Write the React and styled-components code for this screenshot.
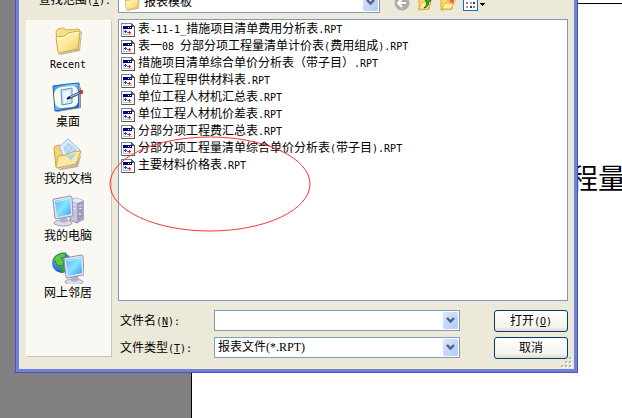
import { useState } from "react";
import styled, { createGlobalStyle } from "styled-components";

const files = [
  "表-11-1_措施项目清单费用分析表.RPT",
  "表一08 分部分项工程量清单计价表(费用组成).RPT",
  "措施项目清单综合单价分析表（带子目）.RPT",
  "单位工程甲供材料表.RPT",
  "单位工程人材机汇总表.RPT",
  "单位工程人材机价差表.RPT",
  "分部分项工程费汇总表.RPT",
  "分部分项工程量清单综合单价分析表(带子目).RPT",
  "主要材料价格表.RPT",
];

// latin runs take half the width of a chinese character
const Mixed = ({ text }) =>
  text
    .split(/([\x20-\x7e]+)/)
    .filter(Boolean)
    .map((part, i) =>
      /^[\x20-\x7e]/.test(part) ? <Latin key={i}>{part}</Latin> : part
    );

const Hotkey = ({ text, letter, colon }) => (
  <>
    {text}
    <Latin>
      (<u>{letter}</u>){colon && ":"}
    </Latin>
  </>
);

const FolderIcon = ({ size = 16 }) => (
  <svg width={size} height={size} viewBox="0 0 32 32">
    <defs>
      <linearGradient id="folder" x1="0" y1="0" x2="1" y2="1">
        <stop offset="0" stopColor="#fffbc4" />
        <stop offset="0.5" stopColor="#fdea9a" />
        <stop offset="1" stopColor="#f3c556" />
      </linearGradient>
    </defs>
    <path d="M6 31l21-5 2-18 1 1-2 19-20 4z" fill="#b9b6aa" />
    <path
      d="M4 9q0-2 2-3l5-1q2 0 3 2l12-1q2 0 2 2l-2 17-18 4q-2 0-2-2z"
      fill="#f8e08a"
      stroke="#d3ae50"
    />
    <path
      d="M4 14l9-1 3-3 11-2q1 0 1 1l-2 17-19 4q-1 0-1-1z"
      fill="url(#folder)"
      stroke="#cda548"
    />
    <path d="M5 15l9-1 3-3 10-2" fill="none" stroke="#fffddc" />
  </svg>
);

const DesktopIcon = () => (
  <svg width="32" height="32" viewBox="0 0 32 32">
    <defs>
      <linearGradient id="blotter" x1="0" y1="0" x2="1" y2="1">
        <stop offset="0" stopColor="#2f83dd" />
        <stop offset="0.4" stopColor="#8fd0fa" />
        <stop offset="0.7" stopColor="#3a8ae0" />
        <stop offset="1" stopColor="#155cb8" />
      </linearGradient>
    </defs>
    <path d="M4 30l24-4V6l1 1v20L5 31z" fill="#8d9199" />
    <path d="M1 5q13-2 26-3v24L3 30z" fill="url(#blotter)" stroke="#1c5fb2" />
    <path
      d="M9 6l12-1q4 1 5 5v11q-1 4-5 5L9 27q-5-1-6-5l-1-10q2-5 7-6z"
      fill="#fdfbe3"
    />
    <path d="M9 9l11-2v15l-10 2z" fill="#cbe9fd" stroke="#4b93d8" />
    <path d="M11 11l7-1v7l-6 6z" fill="#f0f9ff" />
    <path d="M17 17l10-5" stroke="#3f5f92" strokeWidth="3" />
    <path d="M18 16l9-4" stroke="#9dcdf0" />
    <circle cx="29" cy="11" r="2.200" fill="#c9382a" />
    <path d="M15 18l3-2" stroke="#111" strokeWidth="2" />
  </svg>
);

const DocumentsIcon = () => (
  <svg width="32" height="32" viewBox="0 0 32 32">
    <path d="M6 31l18-4 6-13-4 15-17 3z" fill="#b3b0a4" />
    <path
      d="M2 10q0-2 2-2l4-1 3 3 15 1 2 3-4 12-18 4-2-1z"
      fill="#f6d774"
      stroke="#cba346"
    />
    <path d="M7 9l9-8 12 11-6 11-10-4z" fill="#e1f0fe" stroke="#91b8de" />
    <path d="M11 9l5-5 9 8-5 8-6-3z" fill="#a7d3fa" />
    <path d="M13 7l9 9M16 4l-6 7M19 7l-6 8M22 10l-6 8" stroke="#dff0ff" />
    <path
      d="M4 29l2-11 9-1 5-3 9-1-5 13-19 4z"
      fill="#fde8a2"
      stroke="#cfa94e"
    />
    <path d="M15 18l9-3-5 8z" fill="#a9d5f5" />
  </svg>
);

const Screen = () => (
  <>
    <ellipse cx="11" cy="28" rx="9" ry="3" fill="#dcdce8" stroke="#a0a0ba" />
    <path d="M8 22l7-1 1 5q-4 3-8 1z" fill="#b2b2cc" />
    <path
      d="M1 5q0-1 1-1l16-3q2 0 2 2l1 17q0 1-1 1L4 24q-1 0-1-1z"
      fill="#e3e3ef"
      stroke="#9292b2"
    />
    <path d="M3 6l15-3 1 16-14 3z" fill="url(#screen)" />
    <path d="M4 7l13-3" stroke="#bcf2ff" />
  </>
);

const ScreenGradient = () => (
  <defs>
    <linearGradient id="screen" x1="0" y1="0" x2="1" y2="1">
      <stop offset="0" stopColor="#4fb4f6" />
      <stop offset="0.500" stopColor="#86e4ff" />
      <stop offset="1" stopColor="#3d97f0" />
    </linearGradient>
  </defs>
);

const ComputerIcon = () => (
  <svg width="32" height="32" viewBox="0 0 32 32">
    <ScreenGradient />
    <path d="M18 5l6-2 8 3v18l-7 4-7-3z" fill="#c3c3da" stroke="#8f8eb0" />
    <path d="M18 5l6-2 8 3-7 2z" fill="#ebebf4" />
    <path d="M25 8l6-2v17l-6 4z" fill="#9d9cc0" />
    <path d="M20 9l4 1M20 13l4 1M27 11l3-1M27 14l3-1" stroke="#ededf7" />
    <circle cx="28" cy="19" r="1" fill="#d8dcfb" />
    <Screen />
  </svg>
);

const NetworkIcon = () => (
  <svg width="32" height="32" viewBox="0 0 32 32">
    <defs>
      <radialGradient id="globe" cx="0.350" cy="0.300" r="0.800">
        <stop offset="0" stopColor="#7dbdff" />
        <stop offset="1" stopColor="#0748aa" />
      </radialGradient>
    </defs>
    <circle cx="10" cy="11" r="10" fill="url(#globe)" />
    <path
      d="M4 4q5-4 10-3l-1 4-4 1 3 4-2 4-5-1-2-4-2-1z"
      fill="#62c83f"
      stroke="#2a8b29"
    />
    <path d="M10 13l5 1 1 3-5 4-3-4z" fill="#38a432" />
    <g transform="translate(11 2)">
      <Screen />
    </g>
  </svg>
);

const ReportIcon = () => (
  <svg width="14" height="16" viewBox="0 0 14 16" shapeRendering="crispEdges">
    <path d="M0 1h10l4 4v10H0z" fill="#848484" />
    <path d="M1 2h9v3h3v9H1z" fill="#fff" />
    <path d="M10 1h1v1h1v1h1v1h1v11H1v-1h12V5h-3z" fill="#5a5a5a" />
    <path d="M2 4h9v9H2z" fill="#c6c3c6" />
    <path d="M3 7h8v5H3z" fill="#fff" />
    <path d="M2 4h9v3H2z" fill="#000084" />
    <path d="M7 5h1v1H7zM9 5h1v1H9z" fill="#fff" />
    <path d="M4 8h1v1h1v1H5v1H4v-1H3V9h1z" fill="#2139c6" />
    <path d="M8 9h1v1h1v1H9v1H8v-1H7v-1h1z" fill="#e7212b" />
    <path d="M6 10h1v1H6z" fill="#27964a" />
  </svg>
);

const BackIcon = () => (
  <svg width="16" height="16" viewBox="0 0 16 16">
    <circle cx="8" cy="8" r="7.500" fill="#aeaea9" />
    <path d="M12 8H4m4-4L4 8l4 4" fill="none" stroke="#fff" strokeWidth="2" />
  </svg>
);

const UpIcon = () => (
  <svg width="16" height="16" viewBox="0 0 16 16">
    <path d="M2 3h4l2 2h6l-2 9-10 1z" fill="#fbdf72" stroke="#d8a62f" />
    <path d="M2 14l3-7h9l-3 7z" fill="#fff0a0" stroke="#dfb444" />
    <path
      d="M7 13q3-2 3-7H8l3-4 3 4h-2q0 6-5 7z"
      fill="#3daa35"
      stroke="#22771f"
    />
  </svg>
);

const NewFolderIcon = () => (
  <svg width="16" height="16" viewBox="0 0 16 16">
    <path d="M1 4h5l2 2h5l-1 8-11 1z" fill="#fbdc68" stroke="#d9a834" />
    <path d="M2 14l3-6h9l-3 6z" fill="#fff2a6" stroke="#dfb444" />
    <path d="M12 2v8M8 6h8M9 3l6 6M15 3L9 9" stroke="#f9a65c" />
    <circle cx="12" cy="6" r="2" fill="#ee6436" />
  </svg>
);

const ViewsIcon = () => (
  <svg width="24" height="16" viewBox="0 0 24 16" shapeRendering="crispEdges">
    <path d="M0 0h15v16H0z" fill="#1668d8" />
    <path d="M1 1h13v14H1z" fill="#fff" />
    <path d="M3 7h2v2H3zM10 11h2v2h-2z" fill="#5b8ed9" />
    <path d="M7 7h2v2H7zM3 11h2v2H3z" fill="#e98762" />
    <path d="M10 7h2v2h-2zM7 11h2v2H7z" fill="#26365c" />
    <path d="M3 3h2v2H3zM7 3h2v2H7zM10 3h2v2h-2z" fill="#6ca46a" />
    <path d="M17 8h5v1h-1v1h-1v1h-1v-1h-1V9h-1z" fill="#000" />
  </svg>
);

const ArrowIcon = () => (
  <svg width="9" height="7" viewBox="0 0 9 7">
    <path
      d="M1 1l3.500 3.500L8 1"
      fill="none"
      stroke="#4d6185"
      strokeWidth="2.400"
    />
  </svg>
);

const Grip = () => (
  <svg width="12" height="12" viewBox="0 0 12 12" shapeRendering="crispEdges">
    <path
      d="M9 1h2v2H9zM5 5h2v2H5zM9 5h2v2H9zM1 9h2v2H1zM5 9h2v2H5zM9 9h2v2H9z"
      fill="#fff"
    />
    <path
      d="M8 0h2v2H8zM4 4h2v2H4zM8 4h2v2H8zM0 8h2v2H0zM4 8h2v2H4zM8 8h2v2H8z"
      fill="#b8b4a3"
    />
  </svg>
);

const places = [
  { name: "Recent", icon: <FolderIcon size={32} /> },
  { name: "桌面", icon: <DesktopIcon /> },
  { name: "我的文档", icon: <DocumentsIcon /> },
  { name: "我的电脑", icon: <ComputerIcon /> },
  { name: "网上邻居", icon: <NetworkIcon /> },
];

const App = () => {
  const [fileName, setFileName] = useState("");

  return (
    <Workspace>
      <GlobalStyle />
      <Page>
        <Rule />
        <PageTitle>程量</PageTitle>
      </Page>

      <Dialog>
        <LookInLabel htmlFor="lookIn">
          <Hotkey text="查找范围" letter="I" colon />
        </LookInLabel>
        <Toolbar>
          <Combo>
            <ComboIcon>
              <FolderIcon size={18} />
            </ComboIcon>
            <Select id="lookIn">
              <option>报表模板</option>
            </Select>
            <Arrow>
              <ArrowIcon />
            </Arrow>
          </Combo>
          <Tools>
            <ToolButton aria-label="后退">
              <BackIcon />
            </ToolButton>
            <ToolButton aria-label="向上">
              <UpIcon />
            </ToolButton>
            <ToolButton aria-label="新建文件夹">
              <NewFolderIcon />
            </ToolButton>
            <ToolButton aria-label="查看">
              <ViewsIcon />
            </ToolButton>
          </Tools>
        </Toolbar>

        <Places>
          {places.map((place) => (
            <Place key={place.name}>
              {place.icon}
              <PlaceName>
                <Mixed text={place.name} />
              </PlaceName>
            </Place>
          ))}
        </Places>

        <Main>
          <FileList>
            {files.map((file) => (
              <File key={file}>
                <ReportIcon />
                <span>
                  <Mixed text={file} />
                </span>
              </File>
            ))}
          </FileList>
          <Fields>
            <label htmlFor="fileName">
              <Hotkey text="文件名" letter="N" colon />
            </label>
            <Combo>
              <Input
                id="fileName"
                value={fileName}
                onChange={(e) => setFileName(e.target.value)}
              />
              <Arrow>
                <ArrowIcon />
              </Arrow>
            </Combo>
            <Button>
              <Hotkey text="打开" letter="O" />
            </Button>
            <label htmlFor="fileType">
              <Hotkey text="文件类型" letter="T" colon />
            </label>
            <Combo>
              <Select id="fileType">
                <option>报表文件(*.RPT)</option>
              </Select>
              <Arrow>
                <ArrowIcon />
              </Arrow>
            </Combo>
            <Button>取消</Button>
          </Fields>
        </Main>
        <Corner>
          <Grip />
        </Corner>
      </Dialog>

      <Marker width="202" height="97" viewBox="0 0 202 97">
        <ellipse cx="101" cy="48" rx="100" ry="47" />
      </Marker>
    </Workspace>
  );
};

export default App;

const GlobalStyle = createGlobalStyle`
  * {
    box-sizing: border-box;
  }

  body {
    margin: 0;
    color: #000;
    font-family: "Liberation Serif", "Noto Sans CJK SC", serif;
    font-size: 12px;
    line-height: 17px;
  }

  button, input, select {
    margin: 0;
    color: inherit;
    font: inherit;
  }

  svg {
    display: block;
    flex: none;
  }
`;

const Latin = styled.span`
  font-family: "DejaVu Sans Mono", monospace;
  font-size: 10px;
  white-space: pre;
`;

const Workspace = styled.div`
  position: relative;
  display: flex;
  min-height: 100vh;
  padding-left: 191px;
  overflow: hidden;
  background: #808080;
`;

const Page = styled.div`
  flex: 1;
  padding-top: 3px;
  border-left: 1px solid #000;
  background: #fff;
`;

const Rule = styled.hr`
  height: 1px;
  margin: 0;
  border: none;
  background: #000;
`;

const PageTitle = styled.h1`
  margin: 160px -4px 0 0;
  font-size: 28px;
  font-weight: 400;
  line-height: 32px;
  text-align: right;
`;

const Dialog = styled.div`
  position: absolute;
  top: -12px;
  left: 15px;
  right: 44px;
  display: grid;
  grid-template-columns: 86px 1fr;
  gap: 6px;
  padding: 4px 6px 10px 7px;
  border: 4px solid #7080dc;
  border-top: none;
  background: #ece9d8;
  outline: 1px solid #4c50bc;
  outline-offset: -1px;
`;

const LookInLabel = styled.label`
  justify-self: end;
  padding-right: 1px;
`;

const Toolbar = styled.div`
  display: grid;
  grid-template-columns: 262px 1fr;
  gap: 14px;
`;

const Tools = styled.div`
  display: flex;
  align-items: center;
  gap: 7px;
`;

const ToolButton = styled.button`
  padding: 0;
  border: none;
  background: none;
`;

const Combo = styled.div`
  display: flex;
  position: relative;
  height: 21px;
  border: 1px solid #7f9db9;
  background: #fff;
`;

const ComboIcon = styled.span`
  padding-left: 4px;
`;

const Select = styled.select`
  flex: 1;
  min-width: 0;
  padding: 0 20px 0 3px;
  border: none;
  background: none;
  appearance: none;
  outline: none;
`;

const Input = styled.input`
  flex: 1;
  min-width: 0;
  padding: 0 20px 0 3px;
  border: none;
  background: none;
  outline: none;
`;

const Arrow = styled.span`
  position: absolute;
  top: 1px;
  right: 1px;
  bottom: 1px;
  display: flex;
  align-items: center;
  justify-content: center;
  width: 15px;
  border-radius: 2px;
  background: linear-gradient(135deg, #dbe5ff, #b4c9f8);
  pointer-events: none;
`;

const Places = styled.nav`
  display: flex;
  flex-direction: column;
  gap: 7px;
  margin: 1px 0 2px;
  padding: 2px 2px 0 0;
  border: 1px solid #fff;
  border-right-color: #cbc7b8;
  border-bottom-color: #cbc7b8;
  background: #f9f8f3;
`;

const Place = styled.button`
  display: flex;
  flex-direction: column;
  align-items: center;
  padding: 0;
  border: none;
  background: none;
`;

const PlaceName = styled.span`
  line-height: 18px;
`;

const Main = styled.div`
  min-width: 0;
`;

const FileList = styled.ul`
  min-height: 282px;
  margin: 0;
  padding: 1px 2px;
  border: 1px solid #7f9db9;
  background: #fff;
  list-style: none;
`;

const File = styled.li`
  display: flex;
  align-items: center;
  gap: 3px;
  height: 17px;
  white-space: nowrap;
`;

const Fields = styled.div`
  display: grid;
  grid-template-columns: 94px 1fr 74px;
  grid-auto-rows: 22px;
  gap: 5px 0;
  margin-top: 9px;

  label {
    padding: 3px 0 0 2px;
  }

  ${Combo} {
    margin: 0 34px 0 2px;
  }
`;

const Button = styled.button`
  padding: 0;
  border: 1px solid #003c74;
  border-radius: 3px;
  background: linear-gradient(#fff, #f3f2ec 80%, #dedbd0);
  line-height: 18px;
`;

const Corner = styled.div`
  position: absolute;
  right: 1px;
  bottom: 0;
`;

const Marker = styled.svg`
  position: absolute;
  top: 136px;
  left: 109px;
  fill: none;
  stroke: #f33;
  pointer-events: none;
`;
